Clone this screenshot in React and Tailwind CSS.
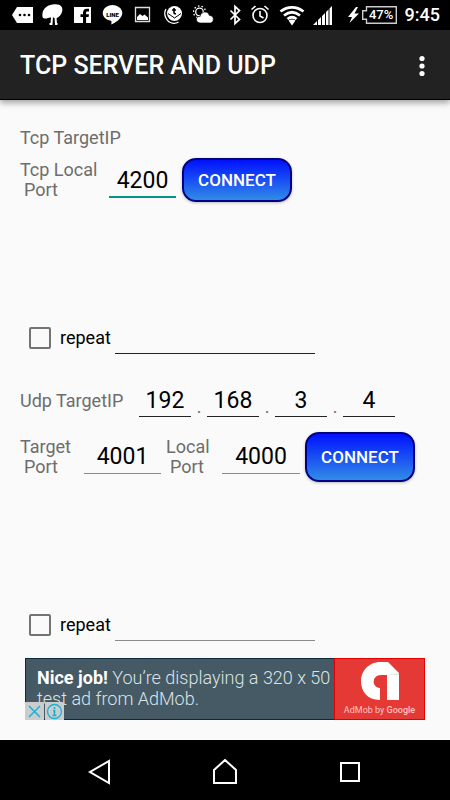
import React from "react";

const notificationIcons = [
  {
    name: "Messages",
    art: (
      <>
        <path d="M1 15 6 7h16v16H6z" fill="#fff" />
        <circle cx="9" cy="15" r="1.300" />
        <circle cx="13.500" cy="15" r="1.300" />
        <circle cx="18" cy="15" r="1.300" />
      </>
    ),
  },
  {
    name: "Shell",
    art: (
      <>
        <path d="M1.500 17C.5 10 5 5 13 4.300c7-.5 9.500 3.200 8 7.700-1 3-3 5.500-6.500 6.500l-3-1.500-4.500 1c-2 .7-4.500 1-5.500-1z" fill="#fff" />
        <path d="m11 17-.5 7H8.500M14.500 17l.5 7h1.500" fill="none" stroke="#fff" strokeWidth="2" />
      </>
    ),
  },
  {
    name: "Facebook",
    art: (
      <>
        <path d="M3 7h17v16H3z" fill="#fff" />
        <path d="M12 23v-6H9.500v-2.800H12v-1.700c0-2.500 1.500-3.800 3.800-3.800H18v2.700h-1.500c-1 0-1.400.4-1.400 1.300v1.500H18l-.4 2.800h-2.500v6z" />
      </>
    ),
  },
  {
    name: "LINE",
    art: (
      <>
        <path d="M11.500 5C6 5 1.800 8.700 1.800 13c0 4 3.300 7 8 7.700.9.200.8 1 .5 3.800 4-1.800 11-6 11-11.500C21.300 8.700 17 5 11.500 5z" fill="#fff" />
        <text x="11.500" y="16.500" textAnchor="middle" className="font-['Roboto',sans-serif] text-[6px] font-black" fill="#000">LINE</text>
      </>
    ),
  },
  {
    name: "Picture",
    art: (
      <>
        <path d="M4.500 7.500h14v14h-14z" fill="none" stroke="#ddd" strokeWidth="1.300" />
        <path d="M6 20v-3l3-3 2.500 2 2-1.500 3.500 3V20z" fill="#fff" />
      </>
    ),
  },
  {
    name: "Timer",
    art: (
      <>
        <circle cx="13.500" cy="13.500" r="7.500" fill="#fff" />
        <path d="M5 9c-3 5 0 13.500 7.500 14.300 2 .1 3.500-.3 5-1.300" fill="none" stroke="#fff" strokeWidth="1.300" />
        <path d="m7 13.500 6.500 4.500 6.500-4.500" fill="none" stroke="#000" strokeWidth="1" />
        <path d="M13 8v4.500q0 1.500 2 1.200M11 10h4" fill="none" stroke="#000" strokeWidth="1.600" />
      </>
    ),
  },
  {
    name: "Weather",
    art: (
      <>
        <circle cx="8.500" cy="12" r="3.800" fill="none" stroke="#fff" strokeWidth="1.300" />
        <circle cx="8.500" cy="12" r="6" fill="none" stroke="#fff" strokeWidth="1.300" strokeDasharray="1.500 2.200" />
        <path d="M9 23c-5-.8-4.500-7 .2-6.600.8-5.600 8-5.600 9.200-.9 4.800-.3 5.300 6.700 1 7.500z" fill="#fff" stroke="#000" strokeWidth=".6" />
      </>
    ),
  },
];

function StatusBar() {
  return (
    <header className="flex h-[30px] items-center justify-between bg-black pl-[7px] pr-[10px] text-white">
      <div className="flex">
        {notificationIcons.map((icon) => (
          <svg key={icon.name} role="img" aria-label={icon.name} width="30" height="30" viewBox="-4 0 30 30">
            {icon.art}
          </svg>
        ))}
      </div>
      <div className="flex items-center">
        <svg role="img" aria-label="Bluetooth, alarm, Wi-Fi, signal" width="134" height="30" viewBox="229 0 134 30" fill="none" stroke="#fff">
          <path d="m231.500 10.500 9 9-4.500 4v-17l4.500 4-9 9" strokeWidth="1.700" />
          <circle cx="261" cy="15.500" r="7" strokeWidth="1.600" />
          <path d="M261 11v5l3.500 2M252.500 9.500l4-3.500M269.500 9.500l-4-3.500" strokeWidth="1.600" />
          <path d="M281.500 11.500c7-5.500 16-5.500 23 0M285 15.500c5-4 11-4 16 0M288.500 19c3-2.300 6-2.300 9 0" strokeWidth="2.800" />
          <path d="m289.500 20.500 3.500 5 3.500-5c-2.200-1.500-4.800-1.500-7 0z" fill="#fff" stroke="none" />
          <path d="M314 25l4-4v4zM319 25v-5l3-3v8zM323 25v-9l3-3v12zM327 25V12l2.500-2.500V25zM330.500 25V8.500L333 6v19z" fill="#fff" stroke="none" />
          <path d="m357 7-8 10h4l-2.500 6 9.500-9.500h-4.500L359 7z" fill="#fff" stroke="none" />
        </svg>
        <div className="relative flex h-[18px] w-[35px] items-center justify-center">
          <svg className="absolute inset-0" width="35" height="18" viewBox="0 0 35 18" fill="none" stroke="#ccc" aria-hidden="true">
            <path d="M4.500.7h29.800v16.600H4.500v-4H.7V4.700h3.800z" strokeWidth="1.400" />
          </svg>
          <span className="relative pl-1 text-[13px] font-medium leading-4">47%</span>
        </div>
        <time className="ml-2 text-[18px] font-medium leading-6">9:45</time>
      </div>
    </header>
  );
}

function Field({ label, value, className }) {
  return (
    <input
      aria-label={label}
      defaultValue={value}
      className={"min-w-0 rounded-none bg-transparent px-0 pb-0 pt-[2px] text-center text-[23px] text-black outline-none " + className}
    />
  );
}

function ConnectButton({ className }) {
  return (
    <button
      type="button"
      className={
        "w-[110px] shrink-0 rounded-[14px] border-2 border-[#000080] bg-linear-to-b/srgb from-[#0011ff] to-[#318ce7] pt-[2px] text-[17px] font-medium text-white shadow-[0_1px_3px_rgba(0,0,0,0.25)] " +
        className
      }
    >
      CONNECT
    </button>
  );
}

function RepeatRow({ id, line, className }) {
  return (
    <div className={"flex h-8 items-center pl-[9px] " + className}>
      <input id={id} type="checkbox" className="size-[22px] shrink-0 appearance-none rounded-[2px] border-2 border-[#737373] checked:bg-[#009688]" />
      <label htmlFor={id} className="ml-[9px] w-[55px] shrink-0 text-[18px] leading-5 text-black">
        repeat
      </label>
      <Field label="Message to repeat" value="" className={"h-8 w-[200px] border-b " + line} />
    </div>
  );
}

function PortLabel({ first, className }) {
  return (
    <span className={"shrink-0 leading-5 " + className}>
      <span className="block">{first}</span>
      <span className="block pl-1">Port</span>
    </span>
  );
}

function AdBanner() {
  return (
    <aside className="mx-[5px] mt-[17px] flex h-[62px]">
      <div className="relative min-w-0 flex-1 border-y border-l border-[#0c2b40] bg-[#455a64] pl-[11px] pt-[8px] text-[18px] font-light leading-[21px] text-[#dce3e6]">
        <p>
          <b className="font-bold text-white">Nice job!</b> You’re displaying a 320 x 50 test ad from AdMob.
        </p>
        <div className="absolute -bottom-px -left-px flex gap-px">
          <button type="button" aria-label="Close ad" className="flex h-[18px] w-[19px] items-center justify-center bg-[#cccccc]">
            <svg width="15" height="15" viewBox="0 0 15 15" stroke="#14b4d8" strokeWidth="1.500">
              <path d="m2 2 11 11M13 2 2 13" />
            </svg>
          </button>
          <button type="button" aria-label="About this ad" className="flex h-[18px] w-[19px] items-center justify-center bg-[#cccccc]">
            <svg width="17" height="17" viewBox="0 0 17 17" fill="none" stroke="#14b4d8" strokeWidth="1.400">
              <circle cx="8.500" cy="8.500" r="7" />
              <path d="M8.500 4v2M7 7.500h1.500v5M6.500 12.500h4" strokeWidth="1.700" />
            </svg>
          </button>
        </div>
      </div>
      <div className="flex w-[91px] shrink-0 flex-col items-center border border-[#e50000] bg-[#e53935] pt-[3px]">
        <svg width="38" height="38" viewBox="0 0 38 38" fill="#fff" role="img" aria-label="AdMob">
          <path d="M19 0h8l11 11v27H26V13h-6c-9 0-10 12-1 13v12C6 38 0 29 0 19S8 0 19 0z" />
          <path d="M26 13 38 11v2H26z" fill="#e6e6e6" />
        </svg>
        <p className="mt-[3px] text-[9px] leading-[14px] text-[#ffc5c0]">
          AdMob by <span className="font-medium">Google</span>
        </p>
      </div>
    </aside>
  );
}

export default function App() {
  return (
    <div className="flex min-h-screen flex-col bg-[#fafafa] font-['Roboto',sans-serif]">
      <StatusBar />
      <div className="flex h-[70px] items-center justify-between border-b border-black bg-[#222222] pl-5 pr-[18px] pt-[3px] shadow-[0_3px_6px_rgba(0,0,0,0.35)]">
        <h1 className="text-[25px] font-medium leading-8 text-white">TCP SERVER AND UDP</h1>
        <button type="button" aria-label="More options">
          <svg width="20" height="24" viewBox="0 0 20 24" fill="#fff">
            <circle cx="10" cy="4.500" r="2.600" />
            <circle cx="10" cy="12" r="2.600" />
            <circle cx="10" cy="19.500" r="2.600" />
          </svg>
        </button>
      </div>

      <main className="flex-1 px-5 pt-7 pb-5 text-[18px] text-[#6d6d6d]">
        <p className="leading-5">Tcp TargetIP</p>
        <div className="mt-[10px] flex h-11 items-center">
          <PortLabel first="Tcp Local" className="w-[89px]" />
          <Field label="Tcp local port" value="4200" className="h-9 w-[67px] border-b-2 border-[#009688]" />
          <ConnectButton className="ml-[6px] h-11" />
        </div>
        <RepeatRow id="tcp-repeat" line="border-[#222222]" className="mt-[120px]" />

        <div className="mt-[31px] flex h-8 items-center">
          <span className="w-[119px] shrink-0 leading-5">Udp TargetIP</span>
          <Field label="Address part 1" value="192" className="h-8 w-[52px] border-b border-[#222222]" />
          <span className="w-4 self-end text-center leading-5">.</span>
          <Field label="Address part 2" value="168" className="h-8 w-[52px] border-b border-[#222222]" />
          <span className="w-4 self-end text-center leading-5">.</span>
          <Field label="Address part 3" value="3" className="h-8 w-[52px] border-b border-[#222222]" />
          <span className="w-4 self-end text-center leading-5">.</span>
          <Field label="Address part 4" value="4" className="h-8 w-[52px] border-b border-[#222222]" />
        </div>
        <div className="mt-[15px] flex h-[50px] items-center">
          <PortLabel first="Target" className="w-[64px]" />
          <Field label="Target port" value="4001" className="h-[34px] w-[77px] border-b border-[#8a8a8a]" />
          <PortLabel first="Local" className="ml-[5px] w-[56px]" />
          <Field label="Local port" value="4000" className="h-[34px] w-[78px] border-b border-[#8a8a8a]" />
          <ConnectButton className="ml-[5px] h-[50px]" />
        </div>
        <RepeatRow id="udp-repeat" line="border-[#8a8a8a]" className="mt-[127px]" />
        <AdBanner />
      </main>

      <nav className="flex h-[60px] items-center justify-around bg-black px-[38px] pt-1">
        <button type="button" aria-label="Back">
          <svg width="24" height="26" viewBox="0 0 24 26" fill="none" stroke="#fff" strokeWidth="2">
            <path d="M21 2v22L2 13z" />
          </svg>
        </button>
        <button type="button" aria-label="Home">
          <svg width="26" height="26" viewBox="0 0 26 26" fill="none" stroke="#fff" strokeWidth="2">
            <path d="M1 11 12 1l11 10v13H1z" />
          </svg>
        </button>
        <button type="button" aria-label="Recent apps">
          <svg width="22" height="22" viewBox="0 0 22 22" fill="none" stroke="#fff" strokeWidth="2">
            <path d="M1 2h18v18H1z" />
          </svg>
        </button>
      </nav>
    </div>
  );
}
